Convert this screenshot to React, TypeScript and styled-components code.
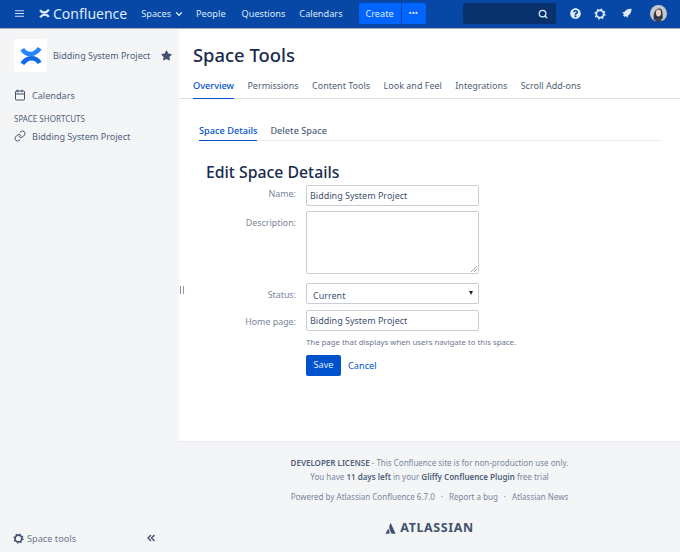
import React from 'react';
import styled, { createGlobalStyle } from 'styled-components';
import { FaStar, FaQuestionCircle } from 'react-icons/fa';
import { FiMenu, FiSearch, FiChevronDown, FiLink, FiCalendar, FiChevronsLeft } from 'react-icons/fi';

const GlobalStyle = createGlobalStyle`
  html, body { margin: 0; padding: 0; background: #fff; }
  body { font-family: "Noto Sans", "Open Sans", sans-serif; font-size: 9px; color: #172b4d; }
  * { box-sizing: border-box; }
`;

const Page = styled.div`
  width: 680px;
  height: 552px;
  display: flex;
  flex-direction: column;
  overflow: hidden;
`;

const Header = styled.header`
  height: 29px;
  flex: none;
  display: flex;
  align-items: center;
  padding: 0 0 1px 14px;
  background: #0747a6;
  border-bottom: 1px solid #a9adb4;
  color: #deebff;
`;

const Burger = styled.span`
  display: flex;
  color: #deebff;
  font-size: 11px;
`;

const Logo = styled.div`
  display: flex;
  align-items: center;
  gap: 3px;
  margin-left: 14px;
  font-size: 14px;
  color: #deebff;
`;

const NavItem = styled.span<{ $left: number }>`
  display: flex;
  align-items: center;
  gap: 3px;
  margin-left: ${(p) => p.$left}px;
  font-size: 9.2px;
  color: #deebff;
`;

const CreateGroup = styled.div`
  display: flex;
  height: 21px;
  margin-left: 16px;
`;

const CreateButton = styled.span<{ $more?: boolean }>`
  display: flex;
  align-items: center;
  justify-content: center;
  width: ${(p) => (p.$more ? 25 : 42)}px;
  background: #0065ff;
  color: #deebff;
  font-size: ${(p) => (p.$more ? 7 : 9.2)}px;
  font-weight: ${(p) => (p.$more ? 700 : 400)};
  letter-spacing: ${(p) => (p.$more ? '0.5px' : 0)};
  border-radius: ${(p) => (p.$more ? '0 2px 2px 0' : '2px 0 0 2px')};
  border-left: ${(p) => (p.$more ? '1px solid #0747a6' : 'none')};
`;

const Search = styled.div`
  display: flex;
  align-items: center;
  justify-content: flex-end;
  width: 93px;
  height: 21px;
  margin-left: 37px;
  padding-right: 8px;
  background: #09326c;
  border-radius: 2px;
  color: #deebff;
  font-size: 10px;
`;

const HeaderIcon = styled.span<{ $left: number }>`
  display: flex;
  margin-left: ${(p) => p.$left}px;
  color: #deebff;
  font-size: 11px;
`;

const Avatar = styled.svg`
  display: block;
  margin-left: 18px;
`;

const Body = styled.div`
  position: relative;
  flex: 1;
  display: flex;
  min-height: 0;
`;

const Sidebar = styled.aside`
  width: 179px;
  flex: none;
  display: flex;
  flex-direction: column;
  padding: 10px 0 7px 14px;
  background: #f4f5f7;
  color: #42526e;
`;

const SpaceHead = styled.div`
  display: flex;
  align-items: center;
  height: 33px;
`;

const SpaceLogo = styled.div`
  display: flex;
  align-items: center;
  justify-content: center;
  width: 33px;
  height: 33px;
  background: #fff;
  border-radius: 2px;
`;

const SpaceName = styled.span`
  margin-left: 6px;
  font-size: 9px;
  color: #505f79;
  white-space: nowrap;
`;

const Star = styled.span`
  display: flex;
  margin-left: 11px;
  color: #42526e;
  font-size: 11px;
`;

const SideRow = styled.div<{ $top: number }>`
  display: flex;
  align-items: center;
  height: 16px;
  gap: 6px;
  margin-top: ${(p) => p.$top}px;
  font-size: 9.1px;
  color: #505f79;
  svg { font-size: 12px; flex: none; color: #42526e; }
`;

const SideHeading = styled.div`
  margin-top: 10px;
  font-size: 8px;
  line-height: 12px;
  color: #505f79;
`;

const SideFooter = styled.div`
  display: flex;
  align-items: center;
  margin-top: auto;
  margin-left: -1px;
  padding-right: 22px;
  font-size: 9.2px;
  color: #6b778c;
`;

const FooterLabel = styled.span`
  margin-left: 3px;
  margin-top: 1px;
`;

const Collapse = styled.span`
  display: flex;
  margin-left: auto;
  font-size: 12px;
  color: #42526e;
`;

const Grip = styled.span`
  position: absolute;
  left: 180px;
  top: 257px;
  width: 4px;
  height: 8px;
  border-left: 1px solid #8993a4;
  border-right: 1px solid #8993a4;
`;

const Main = styled.main`
  flex: 1;
  min-width: 0;
  display: flex;
  flex-direction: column;
`;

const Content = styled.div`
  flex: 1;
  padding-top: 12px;
`;

const Title = styled.h1`
  margin: 0 0 0 14px;
  font-size: 18.4px;
  line-height: 27px;
  font-weight: 500;
  color: #172b4d;
`;

const Tabs = styled.div`
  display: flex;
  gap: 13.4px;
  margin-top: 10px;
  padding-left: 14px;
  height: 21px;
  border-bottom: 1px solid #dfe1e6;
`;

const Tab = styled.span<{ $active?: boolean }>`
  height: 21px;
  line-height: 15px;
  font-size: ${(p) => (p.$active ? 9.2 : 9)}px;
  color: ${(p) => (p.$active ? '#0052cc' : '#505f79')};
  border-bottom: ${(p) => (p.$active ? '1px solid #0052cc' : 'none')};
  font-weight: ${(p) => (p.$active ? 500 : 400)};
`;

const SubTabs = styled.div`
  display: flex;
  gap: 13px;
  width: 461px;
  margin: 24px 0 0 20px;
  height: 18px;
  border-bottom: 1px solid #ebecf0;
`;

const SubTab = styled.span<{ $active?: boolean }>`
  height: 18px;
  line-height: 15px;
  font-size: 9.2px;
  font-weight: 500;
  color: ${(p) => (p.$active ? '#0052cc' : '#505f79')};
  border-bottom: ${(p) => (p.$active ? '1px solid #0052cc' : 'none')};
`;

const FormTitle = styled.h2`
  margin: 20px 0 0 27px;
  font-size: 15.8px;
  line-height: 22px;
  font-weight: 500;
  color: #172b4d;
`;

const Field = styled.div<{ $top?: number }>`
  display: grid;
  grid-template-columns: 117px 173px;
  column-gap: 10px;
  margin-top: ${(p) => p.$top ?? 0}px;
`;

const Label = styled.label<{ $drop?: number }>`
  text-align: right;
  font-size: 8.9px;
  line-height: 16px;
  padding-top: ${(p) => p.$drop ?? 4}px;
  color: #7a869a;
`;

const TextBox = styled.div`
  height: 21px;
  padding-left: 3px;
  font-size: 9px;
  line-height: 19px;
  color: #42526e;
  border: 1px solid #c9ced6;
  border-radius: 2px;
  background: #fff;
`;

const TextArea = styled(TextBox)`
  position: relative;
  height: 63px;
`;

const Resizer = styled.svg`
  position: absolute;
  right: 1px;
  bottom: 1px;
`;

const SelectBox = styled(TextBox)`
  display: flex;
  align-items: center;
  justify-content: space-between;
  padding: 3px 5px 0 6px;
`;

const Caret = styled.span`
  width: 0;
  height: 0;
  margin-top: -5px;
  border-left: 2.5px solid transparent;
  border-right: 2.5px solid transparent;
  border-top: 4px solid #222;
`;

const Hint = styled.div`
  grid-column: 2;
  margin-top: 5px;
  font-size: 7.8px;
  line-height: 12px;
  color: #6b778c;
  white-space: nowrap;
`;

const Actions = styled.div`
  grid-column: 2;
  display: flex;
  align-items: center;
  gap: 7px;
  margin-top: 7px;
`;

const SaveButton = styled.span`
  width: 35px;
  height: 21px;
  text-align: center;
  line-height: 20px;
  font-size: 9.2px;
  color: #deebff;
  background: #0052cc;
  border-radius: 2px;
`;

const CancelLink = styled.span`
  font-size: 9.2px;
  color: #0052cc;
`;

const Footer = styled.footer`
  flex: none;
  height: 111px;
  padding-top: 14px;
  text-align: center;
  background: #f4f5f7;
  border-top: 1px solid #ebecf0;
  color: #7a869a;
  font-size: 8px;
  line-height: 14px;
`;

const FooterLine = styled.div<{ $top?: number }>`
  margin-top: ${(p) => p.$top ?? 0}px;
  white-space: nowrap;
  b { font-weight: 600; color: #505f79; }
`;

const Sep = styled.span`
  margin: 0 6px;
`;

const AtlassianMark = styled.div`
  display: flex;
  align-items: center;
  justify-content: center;
  gap: 4px;
  margin-top: 17px;
  font-size: 12.5px;
  font-weight: 700;
  letter-spacing: 0.6px;
  color: #42526e;
`;

const ConfluenceGlyph = ({ size, from, to }: { size: number; from: string; to: string }) => (
  <svg width={size} height={size} viewBox="0 0 24 24" fill="none">
    <path d="M2.5 4.5C7 12 16 11.5 21.5 3.5" stroke={from} strokeWidth="5" />
    <path d="M2.5 20.5C8 12.5 17 12.5 21.5 19.5" stroke={to} strokeWidth="5" />
  </svg>
);

const GearIcon = ({ size, color }: { size: number; color: string }) => (
  <svg width={size} height={size} viewBox="0 0 12 12" fill="none" stroke={color}>
    <circle cx="6" cy="6" r="3.7" strokeWidth="1.8" />
    <circle cx="6" cy="6" r="4.8" strokeWidth="1.6" strokeDasharray="1.6 2.17" />
  </svg>
);

export default function App() {
  return (
    <Page>
      <GlobalStyle />
      <Header>
        <Burger><FiMenu /></Burger>
        <Logo>
          <ConfluenceGlyph size={11} from="#deebff" to="#deebff" />
          Confluence
        </Logo>
        <NavItem $left={14}>Spaces <FiChevronDown size={10} strokeWidth={3} /></NavItem>
        <NavItem $left={12}>People</NavItem>
        <NavItem $left={16}>Questions</NavItem>
        <NavItem $left={14}>Calendars</NavItem>
        <CreateGroup>
          <CreateButton>Create</CreateButton>
          <CreateButton $more>•••</CreateButton>
        </CreateGroup>
        <Search><FiSearch strokeWidth={3} /></Search>
        <HeaderIcon $left={14}><FaQuestionCircle /></HeaderIcon>
        <HeaderIcon $left={13}><GearIcon size={12} color="#deebff" /></HeaderIcon>
        <HeaderIcon $left={15}>
          <svg width="11" height="11" viewBox="0 0 12 12" fill="#deebff">
            <path d="M11.5 0.8C8 .6 5.6 1.7 3.6 4.3L1 5l2.2 1.6-.9 1.5 1.6 1.6 1.5-.9L7 11l.7-2.6c2.7-2 3.9-4.3 3.8-7.6z" />
          </svg>
        </HeaderIcon>
        <Avatar width="17" height="17" viewBox="0 0 17 17">
          <circle cx="8.5" cy="8.5" r="8.5" fill="#c3c8ce" />
          <path d="M4 15c-1-5 0-10 4.5-11.500C12 3 13 6 12.500 14z" fill="#2f3440" />
          <ellipse cx="8.5" cy="8" rx="2.6" ry="3.4" fill="#e8cfc6" />
          <path d="M5 17c.5-3 2-4 3.5-4s3 1 3.500 4z" fill="#39465a" />
        </Avatar>
      </Header>
      <Body>
        <Sidebar>
          <SpaceHead>
            <SpaceLogo><ConfluenceGlyph size={22} from="#2684ff" to="#0f6ae8" /></SpaceLogo>
            <SpaceName>Bidding System Project</SpaceName>
            <Star><FaStar /></Star>
          </SpaceHead>
          <SideRow $top={15}><FiCalendar />Calendars</SideRow>
          <SideHeading>SPACE SHORTCUTS</SideHeading>
          <SideRow $top={3}><FiLink />Bidding System Project</SideRow>
          <SideFooter>
            <GearIcon size={11} color="#42526e" />
            <FooterLabel>Space tools</FooterLabel>
            <Collapse><FiChevronsLeft strokeWidth={3} /></Collapse>
          </SideFooter>
        </Sidebar>
        <Grip />
        <Main>
          <Content>
            <Title>Space Tools</Title>
            <Tabs>
              <Tab $active>Overview</Tab>
              <Tab>Permissions</Tab>
              <Tab>Content Tools</Tab>
              <Tab>Look and Feel</Tab>
              <Tab>Integrations</Tab>
              <Tab>Scroll Add-ons</Tab>
            </Tabs>
            <SubTabs>
              <SubTab $active>Space Details</SubTab>
              <SubTab>Delete Space</SubTab>
            </SubTabs>
            <FormTitle>Edit Space Details</FormTitle>
            <Field $top={2}>
              <Label $drop={1}>Name:</Label>
              <TextBox>Bidding System Project</TextBox>
            </Field>
            <Field $top={5}>
              <Label>Description:</Label>
              <TextArea>
                <Resizer width="6" height="6" viewBox="0 0 6 6" stroke="#777" strokeWidth="0.7">
                  <path d="M0 6L6 0M3 6L6 3" />
                </Resizer>
              </TextArea>
            </Field>
            <Field $top={9}>
              <Label>Status:</Label>
              <SelectBox>Current<Caret /></SelectBox>
            </Field>
            <Field $top={6}>
              <Label>Home page:</Label>
              <TextBox>Bidding System Project</TextBox>
              <Hint>The page that displays when users navigate to this space.</Hint>
              <Actions>
                <SaveButton>Save</SaveButton>
                <CancelLink>Cancel</CancelLink>
              </Actions>
            </Field>
          </Content>
          <Footer>
            <FooterLine><b>DEVELOPER LICENSE</b> - This Confluence site is for non-production use only.</FooterLine>
            <FooterLine>You have <b>11 days left</b> in your <b>Gliffy Confluence Plugin</b> free trial</FooterLine>
            <FooterLine $top={6}>
              Powered by Atlassian Confluence 6.7.0<Sep>·</Sep>Report a bug<Sep>·</Sep>Atlassian News
            </FooterLine>
            <AtlassianMark>
              <svg width="11" height="11" viewBox="0 0 12 12" fill="#42526e">
                <path d="M3.5 6.2L.4 11.7h4.3c.6-1.700.2-4-1.200-5.500zM5.800.5C4.300 3 4.200 5.700 5.500 8.200l1.700 3.500h4.400L6.500.5c-.2-.3-.5-.3-.7 0z" />
              </svg>
              ATLASSIAN
            </AtlassianMark>
          </Footer>
        </Main>
      </Body>
    </Page>
  );
}
